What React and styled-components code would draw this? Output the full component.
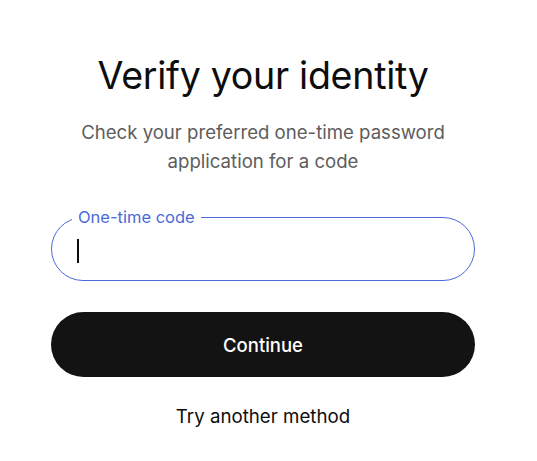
import React from "react";
import styled, { createGlobalStyle } from "styled-components";

const GlobalStyle = createGlobalStyle`
  html, body {
    margin: 0;
    padding: 0;
    background: #ffffff;
  }
  body {
    font-family: Inter, "Noto Sans", "Liberation Sans", sans-serif;
    -webkit-font-smoothing: antialiased;
  }
`;

const Page = styled.main`
  width: 424px;
  margin-left: 51px;
  padding-top: 54px;
  display: flex;
  flex-direction: column;
  align-items: center;
`;

const Title = styled.h1`
  margin: 0;
  font-size: 37.6px;
  font-weight: 400;
  line-height: 44px;
  color: #0d0d0d;
  letter-spacing: -0.3px;
`;

const Subtitle = styled.p`
  margin: 20px 0 0;
  font-size: 18.6px;
  line-height: 29px;
  color: #5d5d5d;
  text-align: center;
  max-width: 400px;
`;

/* outlined field: the legend sits in the top border */
const Field = styled.fieldset`
  box-sizing: border-box;
  width: 100%;
  height: 72px;
  margin: 33px 0 0;
  padding: 0 20px;
  border: 1px solid #4a6ad8;
  border-radius: 32px;
`;

const Legend = styled.legend`
  padding: 0 6px;
  font-size: 16.5px;
  line-height: 16px;
  color: #4a6ad8;
`;

const InputRow = styled.div`
  height: 55px;
  display: flex;
  align-items: center;
`;

const Caret = styled.span`
  width: 1.5px;
  height: 24px;
  margin: -4px 0 0 5px;
  background: #0d0d0d;
  flex: none;
`;

const Input = styled.input`
  flex: 1;
  min-width: 0;
  border: none;
  outline: none;
  background: transparent;
  font: inherit;
  font-size: 17px;
  color: #0d0d0d;
`;

const Button = styled.button`
  width: 100%;
  height: 65px;
  margin-top: 31px;
  border: none;
  border-radius: 33px;
  background: #131313;
  color: #ffffff;
  font-family: inherit;
  font-size: 18.5px;
  font-weight: 500;
  cursor: pointer;
`;

const LinkButton = styled.button`
  margin-top: 28px;
  border: none;
  background: none;
  padding: 0;
  font-family: inherit;
  font-size: 18.7px;
  color: #0d0d0d;
  cursor: pointer;
`;

const App = () => {
  return (
    <>
      <GlobalStyle />
      <Page>
        <Title>Verify your identity</Title>
        <Subtitle>
          Check your preferred one-time password application for a code
        </Subtitle>
        <Field>
          <Legend>One-time code</Legend>
          <InputRow>
            <Caret />
            <Input type="text" inputMode="numeric" aria-label="One-time code" />
          </InputRow>
        </Field>
        <Button>Continue</Button>
        <LinkButton>Try another method</LinkButton>
      </Page>
    </>
  );
};

export default App;
